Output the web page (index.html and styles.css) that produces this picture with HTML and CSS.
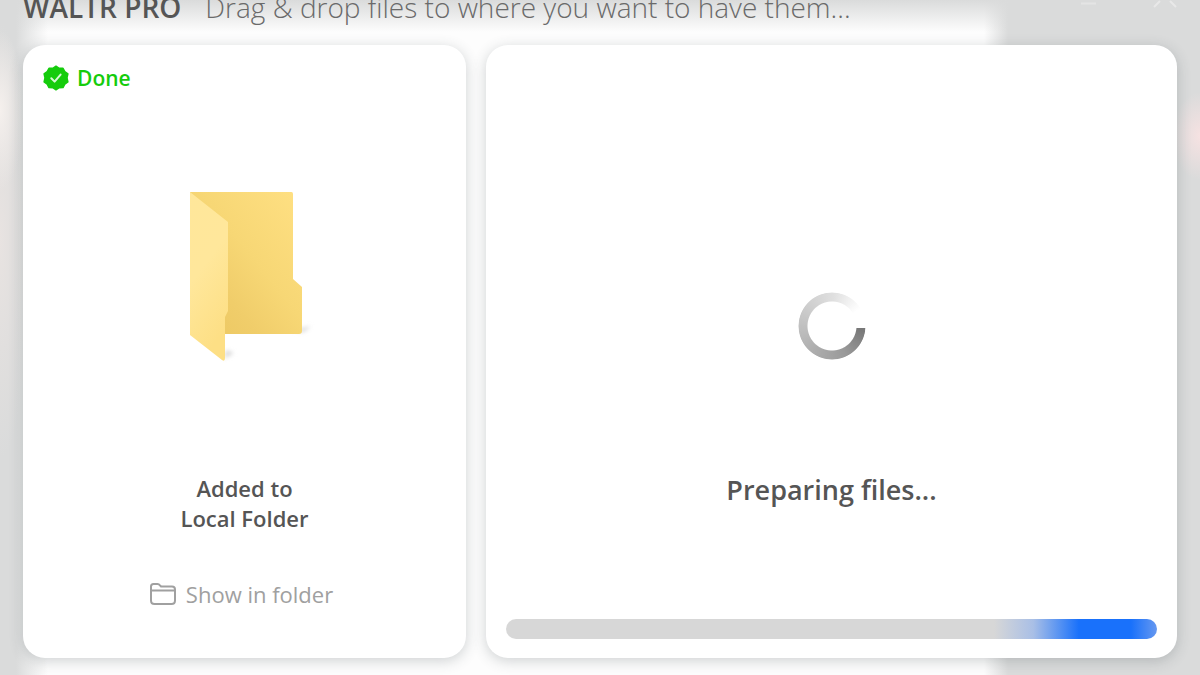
FILE: index.html
```html
<!DOCTYPE html>
<html lang="en">
<head>
<meta charset="utf-8">
<meta name="viewport" content="width=device-width, initial-scale=1">
<title>WALTR PRO</title>
<link rel="stylesheet" href="styles.css">
</head>
<body>
<div class="window">
  <header class="titlebar">
    <h1 class="brand">WALTR PRO</h1>
    <p class="tagline">Drag &amp; drop files to where you want to have them...</p>
    <div class="controls">
      <button class="control" type="button" aria-label="Minimize">
        <svg viewBox="0 0 24 8" aria-hidden="true"><path d="M4 3.500H19" stroke="#e4e4e4" stroke-width="2"/></svg>
      </button>
      <button class="control" type="button" aria-label="Close">
        <svg viewBox="0 0 24 8" aria-hidden="true"><path d="M1 7 7 1M23 7 17 1" stroke="#e8e8e8" stroke-width="2"/></svg>
      </button>
    </div>
  </header>
  <main class="panels">
    <section class="card result">
      <p class="status">
        <svg class="badge" viewBox="0 0 26 26" aria-hidden="true">
          <path d="M13 1.200 16.200 3.300 20 3.300 21.800 6.600 24.900 8.800 24 12.900 24.900 16.900 21.800 19.200 20 22.600 16.200 22.700 13 24.800 9.800 22.700 6 22.600 4.200 19.200 1.100 16.900 2 12.900 1.100 8.800 4.200 6.600 6 3.300 9.800 3.300Z" fill="#15cc0c" stroke="#15cc0c" stroke-width="1.500" stroke-linejoin="round"/>
          <path d="M8.300 13.300 11.600 16.600 17.600 9.600" fill="none" stroke="#d8f8d6" stroke-width="2" stroke-linecap="round" stroke-linejoin="round"/>
        </svg>
        <span>Done</span>
      </p>
      <svg class="folder" viewBox="0 0 128 176" aria-hidden="true">
        <defs>
          <linearGradient id="back" x1="0" y1="1" x2="1" y2="0">
            <stop offset="0" stop-color="#ebc65f"/>
            <stop offset=".3" stop-color="#f0cd6a"/>
            <stop offset=".55" stop-color="#f7d775"/>
            <stop offset="1" stop-color="#ffe083"/>
          </linearGradient>
          <linearGradient id="front" x1="0" y1="0" x2="0.300" y2="1">
            <stop offset="0" stop-color="#ffe79a"/>
            <stop offset=".5" stop-color="#ffe79b"/>
            <stop offset="1" stop-color="#fddf85"/>
          </linearGradient>
          <filter id="soft" x="-50%" y="-50%" width="200%" height="200%"><feGaussianBlur stdDeviation="2"/></filter>
        </defs>
        <path d="M104 141 123 136 116 142ZM36 169 46 163 38 160Z" fill="#d8d8d8" filter="url(#soft)"/>
        <path d="M2 2H103.500Q105 2 105 4V89L114 97V141Q114 144 111 144H36L2 20Z" fill="url(#back)"/>
        <path d="M2 2 40 32V121L37 127V168Q37 172 34 170L2 145Z" fill="url(#front)"/>
      </svg>
      <h2 class="destination">Added to<br>Local Folder</h2>
      <button class="show" type="button">
        <svg class="show-icon" viewBox="0 0 28 24" aria-hidden="true">
          <path d="M2 18.500V4.500Q2 2 4.500 2H8.500Q10 2 11 3.300L12 4.500H23Q26 4.500 26 7.500V18.500Q26 22 22.500 22H5.500Q2 22 2 18.500ZM2 8.500H26" fill="none" stroke="currentColor" stroke-width="2"/>
        </svg>
        <span>Show in folder</span>
      </button>
    </section>
    <section class="card job">
      <div class="spinner"></div>
      <h2 class="message" id="message">Preparing files...</h2>
      <div class="progress" role="progressbar" aria-labelledby="message"></div>
    </section>
  </main>
</div>
</body>
</html>
```
FILE: styles.css
```css
* {
  box-sizing: border-box;
}

body {
  margin: 0;
  background: #dadbdb;
  color: #555;
  font-family: "Open Sans", "Noto Sans", sans-serif;
}

h1,
h2,
p {
  margin: 0;
}

.window {
  display: flex;
  flex-direction: column;
  min-height: 100vh;
  padding: 0 23px 17px;
  overflow: hidden;
  background:
    linear-gradient(to bottom, #dadbdb 0, #dadbdb00 32px) no-repeat,
    radial-gradient(ellipse 28px 44px at 100% 136px, #f6e2e2, #f6e2e200) no-repeat,
    radial-gradient(ellipse 24px 80px at 0 110px, #f5f0ed, #f5f0ed00) no-repeat,
    radial-gradient(ellipse 30px 220px at 0 240px, #e8e3e1, #e8e3e100) no-repeat,
    linear-gradient(to right, #dadbdb 16px, #fdfdfd 48px, #fdfdfd 82%, #dadbdb 84%);
}

.titlebar {
  display: flex;
  gap: 24px;
  height: 45px;
  white-space: nowrap;
}

.brand {
  font-size: 28px;
  font-weight: 600;
  line-height: 14px;
}

.tagline {
  color: #6a6a6a;
  font-size: 28px;
  font-weight: 300;
  line-height: 14px;
}

.controls {
  display: flex;
  gap: 52px;
  align-items: flex-start;
  margin-left: auto;
}

.control {
  display: flex;
  width: 24px;
  height: 8px;
  padding: 0;
  border: 0;
  background: none;
}

.panels {
  display: grid;
  flex: 1;
  grid-template-columns: 443fr 691fr;
  gap: 20px;
}

.card {
  display: flex;
  flex-direction: column;
  align-items: center;
  padding: 20px 20px 19px;
  border-radius: 22px;
  background: #fff;
  box-shadow: 0 3px 14px rgb(60 70 75 / 24%);
}

.status {
  display: flex;
  gap: 8px;
  align-items: center;
  align-self: flex-start;
  color: #15cc0c;
  font-size: 21px;
  font-weight: 600;
  line-height: 26px;
}

.badge {
  width: 26px;
  height: 26px;
}

.folder {
  width: 128px;
  height: 176px;
  margin-top: 99px;
  margin-left: 14px;
}

.destination {
  margin-top: 107px;
  font-size: 22px;
  font-weight: 600;
  line-height: 30px;
  text-align: center;
}

.show {
  display: flex;
  gap: 9px;
  align-items: center;
  margin: auto 7px 30px 0;
  padding: 0;
  border: 0;
  background: none;
  color: #a0a0a0;
  font: inherit;
  font-size: 22px;
  line-height: 30px;
}

.show-icon {
  width: 28px;
  height: 24px;
}

.spinner {
  width: 68px;
  height: 68px;
  margin-top: 227px;
  border-radius: 50%;
  background: conic-gradient(from 94deg, #777 0deg, #999 60deg, #b0b0b0 130deg, #ccc 210deg, #e0e0e0 270deg, #fff 325deg);
  mask: radial-gradient(circle, transparent 24px, #000 25px, #000 33px, transparent 34px);
}

.message {
  margin-top: 112px;
  font-size: 27px;
  font-weight: 600;
  line-height: 36px;
}

.progress {
  width: 100%;
  height: 20px;
  margin-top: auto;
  border-radius: 10px;
  background: linear-gradient(to right, #d7d7d7 75%, #a9bfe6 81%, #1971fb 88%, #1971fb 96%, #6698f0 100%);
}
```
